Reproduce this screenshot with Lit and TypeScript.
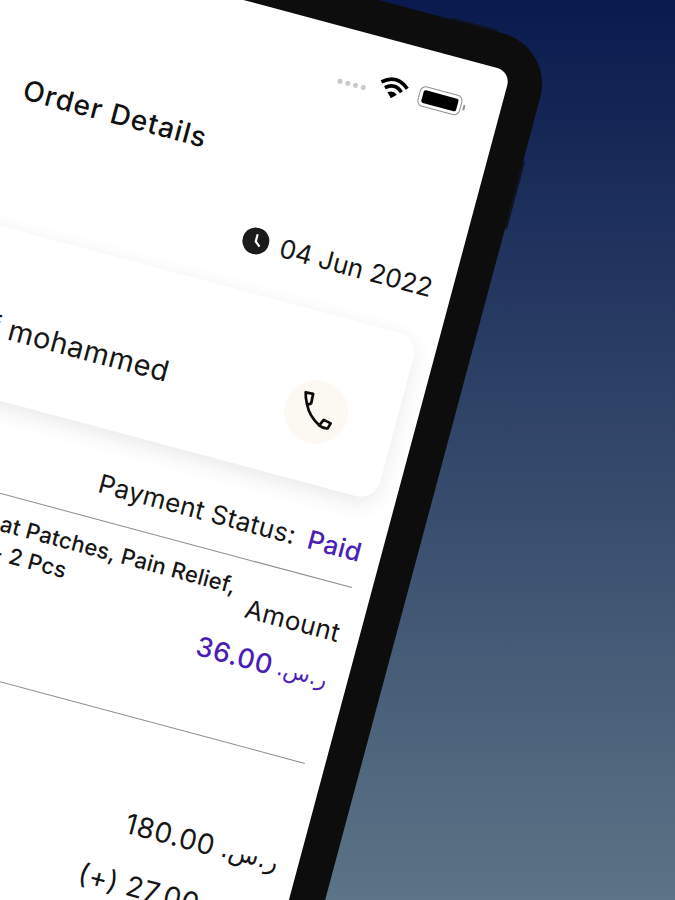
import { LitElement, css, html } from 'lit';
import { customElement } from 'lit/decorators.js';

@customElement('app-root')
export class AppRoot extends LitElement {
  static get styles() {
    return css`
:host {
  display: block;
  position: relative;
  width: 675px;
  height: 900px;
  overflow: hidden;
  background: linear-gradient(180deg, #0a1a4e 0%, #5c7486 100%);
  font-family: "Inter", "DejaVu Sans", sans-serif;
  color: #161616;
}
/* the phone sits tilted on a free canvas */
.device {
  position: absolute;
  left: 0;
  top: 0;
  width: 690px;
  height: 1300px;
  box-sizing: border-box;
  padding: 35px;
  background: #0d0d0d;
  border-radius: 52px;
  transform-origin: 0 0;
  transform: rotate(15deg) translate(-143px, -98px);
}
.side-key {
  position: absolute;
  right: -2px;
  top: 118px;
  width: 2px;
  height: 70px;
  background: #10131f;
}
.top-key {
  position: absolute;
  top: -2px;
  right: 58px;
  width: 48px;
  height: 2px;
  background: #10131f;
}
.screen {
  width: 620px;
  height: 1230px;
  box-sizing: border-box;
  padding: 0 20px;
  background: #fff;
  border-radius: 14px;
}
.status {
  display: flex;
  justify-content: flex-end;
  align-items: flex-start;
  height: 20px;
  padding: 36px 15px 0 0;
  gap: 11px;
}
.dots {
  display: flex;
  gap: 3px;
  margin: 15px 1px 0 0;
}
.dots i {
  width: 5px;
  height: 5px;
  border-radius: 50%;
  background: #c9c9c9;
}
.wifi {
  width: 30px;
  height: 24px;
  margin-top: -2px;
}
.battery {
  display: flex;
  align-items: center;
}
.battery .shell {
  box-sizing: border-box;
  width: 44px;
  height: 21px;
  padding: 3px;
  border: 1.5px solid #8f8f8f;
  border-radius: 6px;
}
.battery .fill {
  height: 100%;
  background: #000;
  border-radius: 2px;
}
.battery .nub {
  width: 2.5px;
  height: 6px;
  margin-left: 1.5px;
  background: #8f8f8f;
  border-radius: 0 2px 2px 0;
}
.title {
  margin: 70px 0 0 134px;
  font-size: 28px;
  line-height: 34px;
  letter-spacing: 1.1px;
  font-weight: 500;
  color: #111;
}
.date {
  display: flex;
  justify-content: flex-end;
  align-items: center;
  gap: 12px;
  height: 30px;
  margin-top: 54px;
  font-size: 26px;
}
.clock {
  width: 27px;
  height: 27px;
}
.card {
  display: flex;
  justify-content: space-between;
  align-items: center;
  margin-top: 37px;
  padding: 66px 48px 39px 118px;
  background: #fff;
  border-radius: 20px;
  box-shadow: 0 6px 22px rgba(0, 0, 0, 0.09);
}
.name {
  font-size: 29px;
  line-height: 34px;
  letter-spacing: 0.5px;
}
.call {
  display: flex;
  width: 64px;
  height: 64px;
  border-radius: 50%;
  background: #fcf9f2;
}
.payment {
  display: flex;
  justify-content: flex-end;
  align-items: center;
  gap: 13px;
  height: 30px;
  margin-top: 38px;
  font-size: 26px;
  letter-spacing: 0.25px;
}
.paid {
  font-weight: 500;
  color: #4b1fb5;
}
.rule {
  height: 1px;
  margin-top: 21px;
  background: #8c8c8c;
}
.rule.second {
  margin-top: 70px;
}
.item {
  display: flex;
  justify-content: space-between;
  align-items: flex-start;
}
.product {
  flex: 1;
  min-width: 0;
  margin: 14px 0 0 0;
  padding-left: 132px;
  font-size: 22px;
  line-height: 29px;
  letter-spacing: 0.2px;
  font-weight: 500;
  white-space: nowrap;
}
.amount {
  flex: none;
  display: flex;
  flex-direction: column;
  align-items: flex-end;
  gap: 19px;
  margin-top: 32px;
}
.amount .label {
  font-size: 26px;
  line-height: 30px;
  letter-spacing: 0.3px;
}
.money {
  display: flex;
  justify-content: flex-end;
  align-items: center;
  gap: 7px;
  font-size: 28px;
  line-height: 34px;
  letter-spacing: 0.6px;
}
.money .cur {
  font-family: "DejaVu Sans", sans-serif;
  font-size: 25px;
  font-weight: 400;
  letter-spacing: 0;
}
.money.accent {
  gap: 5px;
  color: #4b1fb5;
  font-size: 27px;
  font-weight: 500;
  line-height: 30px;
}
.money.accent .cur {
  font-size: 22px;
}
.totals {
  display: flex;
  flex-direction: column;
  gap: 26px;
  margin-top: 86px;
}
    `;
  }

  render() {
    return html`
      <div class="device">
        <div class="side-key"></div>
        <div class="top-key"></div>
        <div class="screen">
          <div class="status">
            <div class="dots"><i></i><i></i><i></i><i></i></div>
            <svg class="wifi" viewBox="0 0 28 22" fill="none" stroke="#000" stroke-width="3.4">
              <path d="M1.5 8.5 Q14 -2.5 26.5 8.5" />
              <path d="M6 13 Q14 6 22 13" />
              <path d="M14 21 L9.5 16.5 Q14 13 18.5 16.5 Z" fill="#000" stroke="none" />
            </svg>
            <div class="battery">
              <div class="shell"><div class="fill"></div></div>
              <div class="nub"></div>
            </div>
          </div>

          <div class="title">Order Details</div>

          <div class="date">
            <svg class="clock" viewBox="0 0 27 27">
              <circle cx="13.5" cy="13.5" r="13.5" fill="#1b1b1b" />
              <path d="M13.5 6.5 V14 L18.5 18" fill="none" stroke="#fff" stroke-width="2.2" />
            </svg>
            <span>04 Jun 2022</span>
          </div>

          <div class="card">
            <div class="name">Asif mohammed</div>
            <div class="call">
              <svg width="64" height="64" viewBox="3 5 64 64" fill="none" stroke="#0c0c0c" stroke-width="2.7" stroke-linejoin="round" stroke-linecap="round">
                <g transform="rotate(-15 35 37)">
                  <path d="M24.5 17.5 L32 19 L30 28.5 L26 30 C24.8 25 24.3 21 24.5 17.5 Z" />
                  <path d="M26 30 C27.5 38 32 45 38 50.5" />
                  <path d="M38 50.5 L42.5 45 L49.5 48.5 L46.5 53.5 C43.5 54 40.5 52.5 38 50.5 Z" />
                </g>
              </svg>
            </div>
          </div>

          <div class="payment">
            <span>Payment Status:</span>
            <span class="paid">Paid</span>
          </div>
          <div class="rule"></div>

          <div class="item">
            <div class="product">
              Deep Heat Patches, Pain Relief,<br />Medium - 2 Pcs
            </div>
            <div class="amount">
              <div class="label">Amount</div>
              <div class="money accent">
                <span>36.00</span>
                <span class="cur" dir="rtl">ر.س.</span>
              </div>
            </div>
          </div>
          <div class="rule second"></div>

          <div class="totals">
            <div class="money">
              <span>180.00</span>
              <span class="cur" dir="rtl">ر.س.</span>
            </div>
            <div class="money">
              <span>(+) 27.00</span>
              <span class="cur" dir="rtl">ر.س.</span>
            </div>
          </div>
        </div>
      </div>
    `;
  }
}
